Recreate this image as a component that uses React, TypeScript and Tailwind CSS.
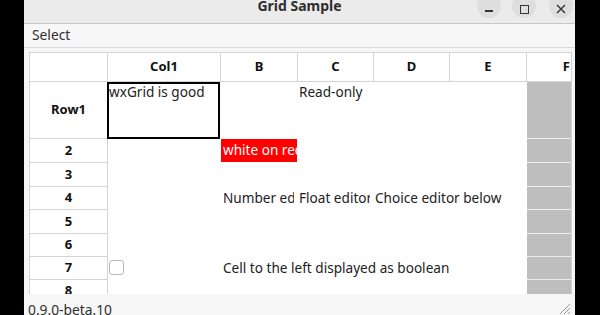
import React from "react";

const font = { fontFamily: '"Noto Sans", "Open Sans", sans-serif' };

const cols = [
  { key: "label", w: "w-[78px]" },
  { key: "c1", w: "w-[113px]" },
  { key: "b", w: "w-[77px]" },
  { key: "c", w: "w-[76px]" },
  { key: "d", w: "w-[76px]" },
  { key: "e", w: "w-[77px]" },
];

const rowHeights = ["h-[57px]", "h-[24px]", "h-[24px]", "h-[23px]", "h-[24px]", "h-[23px]", "h-[23px]", "h-[23px]"];
const rowLabels = ["Row1", "2", "3", "4", "5", "6", "7", "8"];

function Cell({ w, children, className = "" }: { w: string; children?: React.ReactNode; className?: string }) {
  return (
    <div className={`${w} shrink-0 border-r border-b border-white relative overflow-visible ${className}`}>{children}</div>
  );
}

export default function App() {
  return (
    <div className="w-[600px] h-[315px] bg-black overflow-hidden relative text-[#303030]" style={font}>
      <div className="absolute left-[24px] top-0 w-[551px] h-[315px] bg-[#f6f6f6] flex flex-col overflow-hidden">
        {/* title bar */}
        <div className="h-[24px] shrink-0 bg-[#ebebeb] border-b border-[#c8c8c8] relative flex items-start justify-center">
          <div className="text-[14px] font-bold leading-none mt-[-1px] text-[#2e2e2e]">Grid Sample</div>
          <div className="absolute top-[-6px] left-[453px] w-[24px] h-[24px] rounded-full bg-[#dedede] flex items-center justify-center">
            <div className="w-[8px] h-[1.5px] bg-[#333] mt-[10px]" />
          </div>
          <div className="absolute top-[-6px] left-[488px] w-[24px] h-[24px] rounded-full bg-[#dedede] flex items-center justify-center">
            <div className="w-[9px] h-[9px] border-[1.5px] border-[#333] mt-[6px]" />
          </div>
          <div className="absolute top-[-6px] left-[525px] w-[24px] h-[24px] rounded-full bg-[#dedede] flex items-center justify-center">
            <svg width="10" height="10" viewBox="0 0 10 10" className="mt-[6px]">
              <path d="M1 1 L9 9 M9 1 L1 9" stroke="#333" strokeWidth="1.4" />
            </svg>
          </div>
        </div>
        {/* menu bar */}
        <div className="h-[24px] shrink-0 bg-[#f7f7f7] border-b border-[#dcdcdc] flex items-center pl-[8px] text-[13.8px]">
          Select
        </div>
        {/* grid area */}
        <div className="flex-1 min-h-0 pt-[4px] pl-[5px] pr-[3px] overflow-hidden">
          <div className="h-full border-l border-t border-r border-[#d4d4d4] bg-white overflow-hidden text-[13.6px] text-[#222]">
            {/* header */}
            <div className="flex h-[29px] border-b border-[#d4d4d4] text-[13px]">
              <div className="w-[78px] shrink-0 border-r border-[#d4d4d4]" />
              {[
                ["w-[113px]", "Col1"],
                ["w-[77px]", "B"],
                ["w-[76px]", "C"],
                ["w-[76px]", "D"],
                ["w-[77px]", "E"],
              ].map(([w, t]) => (
                <div key={t} className={`${w} shrink-0 border-r border-[#d4d4d4] flex items-center justify-center font-bold text-[#111]`}>
                  {t}
                </div>
              ))}
              <div className="flex-1 flex items-center justify-end pr-[1px] font-bold text-[#111]">F</div>
            </div>
            {rowHeights.map((h, i) => (
              <div key={i} className={`flex ${h}`}>
                <div className="w-[78px] shrink-0 border-r border-b border-[#d4d4d4] flex items-center justify-center font-bold text-[13px] text-[#111]">
                  {rowLabels[i]}
                </div>
                {/* Col1 */}
                <Cell w={cols[1].w}>
                  {i === 0 && (
                    <>
                      <div className="absolute left-[-1px] top-0 w-[113px] h-[57px] border-2 border-black" />
                      <div className="absolute left-[1px] top-[1px] leading-[18px] whitespace-nowrap">wxGrid is good</div>
                    </>
                  )}
                  {i === 6 && (
                    <div className="absolute left-[1px] top-[3px] w-[15px] h-[15px] rounded-[3px] border border-[#b8b8b8] bg-white" />
                  )}
                </Cell>
                {/* B */}
                <Cell w={cols[2].w} className={i === 1 ? "bg-[#ff0000] overflow-hidden" : ""}>
                  {i === 1 && (
                    <div className="absolute left-[2px] top-0 h-full flex items-center whitespace-nowrap text-white">white on red</div>
                  )}
                  {i === 3 && (
                    <div className="absolute left-0 top-0 bottom-0 right-[3px] overflow-hidden">
                      <div className="absolute left-[2px] top-0 h-full flex items-center whitespace-nowrap">Number editor</div>
                    </div>
                  )}
                  {i === 6 && (
                    <div className="absolute left-[2px] top-0 h-full flex items-center whitespace-nowrap z-10">
                      Cell to the left displayed as boolean
                    </div>
                  )}
                </Cell>
                {/* C */}
                <Cell w={cols[3].w}>
                  {i === 0 && (
                    <div className="absolute left-[1px] top-[1px] leading-[18px] whitespace-nowrap">Read-only</div>
                  )}
                  {i === 3 && (
                    <div className="absolute left-0 top-0 bottom-0 right-[3px] overflow-hidden">
                      <div className="absolute left-[1px] top-0 h-full flex items-center whitespace-nowrap">Float editor</div>
                    </div>
                  )}
                </Cell>
                {/* D */}
                <Cell w={cols[4].w}>
                  {i === 3 && (
                    <div className="absolute left-[1px] top-0 h-full flex items-center whitespace-nowrap z-10">
                      Choice editor below
                    </div>
                  )}
                </Cell>
                {/* E */}
                <Cell w={cols[5].w} />
                <div className="flex-1 bg-[#bebebe] border-b border-[#ececec]" />
              </div>
            ))}
          </div>
        </div>
        {/* status bar */}
        <div className="h-[21px] shrink-0 bg-[#f6f6f6] relative text-[13.8px] text-[#303030]">
          <div className="absolute left-[4px] top-[7px] leading-[18px]">0.9.0-beta.10</div>
          <svg className="absolute right-[4px] bottom-0" width="14" height="14" viewBox="0 0 14 14">
            <path d="M13 3 L3 13 M13 7 L7 13 M13 11 L11 13" stroke="#9a9a9a" strokeWidth="1" />
          </svg>
        </div>
      </div>
    </div>
  );
}
